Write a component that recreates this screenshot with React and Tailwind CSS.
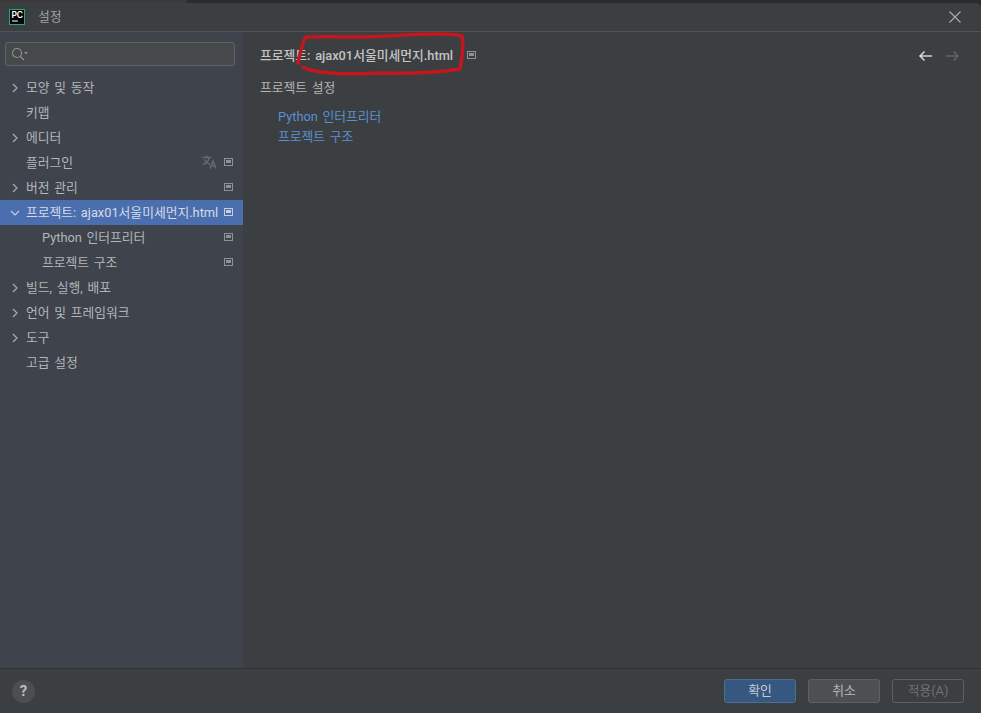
const ChevR = () => (
  <svg width="10" height="10" viewBox="0 0 10 10" fill="none" stroke="#a9adb0" strokeWidth="1.2"><path d="M3 1l4 4-4 4" /></svg>
);
const ChevD = () => (
  <svg width="10" height="10" viewBox="0 0 10 10" fill="none" stroke="#c5cfe4" strokeWidth="1.2"><path d="M1 3l4 4 4-4" /></svg>
);
const Scope = ({ c = "#8f9396" }) => (
  <svg width="9" height="8" viewBox="0 0 9 8" className="mb-[2px] shrink-0"><rect x="0.5" y="0.5" width="8" height="7" fill="none" stroke={c} /><rect x="2" y="2" width="5" height="3" fill={c} /></svg>
);
const Translate = () => (
  <svg width="15" height="14" viewBox="0 0 15 14" fill="none" stroke="#686c70" strokeWidth="1.5"><path d="M0.5 2.5h8.500M4.700 0.500v2M7.500 2.500C6.500 6 4 8.500 1 9.500M2.500 4.500c1 2 3 4 5.500 5" /><path d="M8 13.500l3-7.500 3 7.500M9 11h4" /></svg>
);

const items = [
  { t: "모양 및 동작", a: 1 },
  { t: "키맵" },
  { t: "에디터", a: 1 },
  { t: "플러그인", s: 1, tr: 1 },
  { t: "버전 관리", a: 1, s: 1 },
  { t: "프로젝트: ajax01서울미세먼지.html", open: 1, s: 1, sel: 1 },
  { t: "Python 인터프리터", sub: 1, s: 1 },
  { t: "프로젝트 구조", sub: 1, s: 1 },
  { t: "빌드, 실행, 배포", a: 1 },
  { t: "언어 및 프레임워크", a: 1 },
  { t: "도구", a: 1 },
  { t: "고급 설정" },
];

const Row = ({ it }) => (
  <div className={`flex h-[25px] items-center pr-[10px] ${it.sel ? "bg-[#4b6eaf] text-[#d5dbe6]" : "text-[#b4b6b8]"}`}>
    <span className="flex w-[26px] shrink-0 justify-end pr-[6px]">{it.a ? <ChevR /> : it.open ? <ChevD /> : null}</span>
    <span className={`flex-1 whitespace-nowrap ${it.sub ? "pl-[16px]" : ""}`}>{it.t}</span>
    {it.tr && <span className="mb-[2px] mr-[7px]"><Translate /></span>}
    {it.s && <Scope c={it.sel ? "#c5cfe4" : "#8f9396"} />}
  </div>
);

export default function App() {
  return (
    <div className="relative flex h-[713px] w-[981px] flex-col overflow-hidden bg-[#2b2b2b] text-[12.8px] text-[#b4b6b8] [word-spacing:1.5px] [font-family:Roboto,'Noto_Sans_CJK_KR',sans-serif]">
      <div className="flex h-[3px] shrink-0">
        <div className="w-[187px] bg-[#3a3a3a]" />
      </div>
      <div className="flex min-h-0 flex-1 flex-col overflow-hidden rounded-tr-[5px] bg-[#3c3f41]">
        <div className="flex h-[29px] shrink-0 items-center justify-between border-b border-[#515355] pl-[9px] pr-[19px]">
          <div className="flex items-center gap-[13px]">
            <svg width="16" height="16" viewBox="0 0 16 16">
              <rect x="0.5" y="0.5" width="15" height="15" fill="#000" stroke="#21a878" />
              <text x="2.4" y="9" fontSize="8.500" fontWeight="600" fill="#fff" fontFamily="Inter, sans-serif">PC</text>
              <rect x="3" y="11.500" width="6" height="1" fill="#fff" />
            </svg>
            <span className="text-[#a0a2a4]">설정</span>
          </div>
          <svg width="14" height="14" viewBox="0 0 14 14" stroke="#a9abad" strokeWidth="1.1"><path d="M1.500 1.500l11 11M12.500 1.500l-11 11" /></svg>
        </div>
        <div className="flex min-h-0 flex-1">
          <aside className="w-[243px] shrink-0 bg-[#3e434c]">
            <div className="px-[5px] pt-[10px]">
              <div className="flex h-[24px] w-[230px] items-center rounded-[3px] border border-[#646464] bg-[#45494a] pl-[5px]">
                <svg width="17" height="14" viewBox="0 0 17 14" fill="none" stroke="#8f9396" strokeWidth="1.1"><circle cx="6" cy="6" r="4.500" /><path d="M9.300 9.300L13 13" /><path d="M13 5h4l-2 2.200z" fill="#8f9396" stroke="none" /></svg>
              </div>
            </div>
            <div className="mt-[9px]">
              {items.map((it) => <Row key={it.t} it={it} />)}
            </div>
          </aside>
          <main className="flex-1 pl-[17px] pr-[21px] pt-[14px]">
            <div className="flex h-[19px] items-center justify-between">
              <div className="flex items-center gap-[14px]">
                <span className="font-medium text-[#c4c4c4]">프로젝트: ajax01서울미세먼지.html</span>
                <Scope />
              </div>
              <div className="flex items-center gap-[14px]">
                <svg width="14" height="12" viewBox="0 0 14 12" fill="none" stroke="#d0d2d4" strokeWidth="1.6"><path d="M14 6H2M6.500 1.500L2 6l4.500 4.500" /></svg>
                <svg width="14" height="12" viewBox="0 0 14 12" fill="none" stroke="#606366" strokeWidth="1.6"><path d="M0 6h12M7.500 1.500L12 6l-4.500 4.500" /></svg>
              </div>
            </div>
            <div className="mt-[13px]">프로젝트 설정</div>
            <div className="ml-[18px] mt-[11px] flex flex-col gap-[2px] text-[#5a8fd2]">
              <span className="leading-[18px]">Python 인터프리터</span>
              <span className="leading-[18px]">프로젝트 구조</span>
            </div>
          </main>
        </div>
        <footer className="flex h-[45px] shrink-0 items-center justify-between border-t border-[#323232] pl-[12px] pr-[17px]">
          <span className="flex h-[23px] w-[23px] items-center justify-center rounded-full bg-[#4c4f51] text-[15px] font-bold text-[#b9bbbd]">?</span>
          <div className="flex items-center gap-[12px]">
            <button className="h-[24px] w-[72px] rounded-[3px] border border-[#4c708c] bg-[#365880] text-[#c8ccd2]">확인</button>
            <button className="h-[24px] w-[72px] rounded-[3px] border border-[#5e6060] bg-[#4c5052] text-[#b4b6b8]">취소</button>
            <button className="h-[24px] w-[72px] rounded-[3px] border border-[#5e6060] text-[#707274]">적용(A)</button>
          </div>
        </footer>
      </div>
      <svg className="pointer-events-none absolute left-0 top-0" width="981" height="713" fill="none">
        <path d="M298 63C300 54 302 42 306 37C325 36 350 38 390 36C420 34 450 33 462 36C464 44 462 58 460 69C440 72 410 74 383 73C360 74 340 74 330 73C318 72 308 70 303 67" stroke="#c4161c" strokeWidth="3.500" strokeLinecap="round" strokeLinejoin="round" />
      </svg>
    </div>
  );
}
